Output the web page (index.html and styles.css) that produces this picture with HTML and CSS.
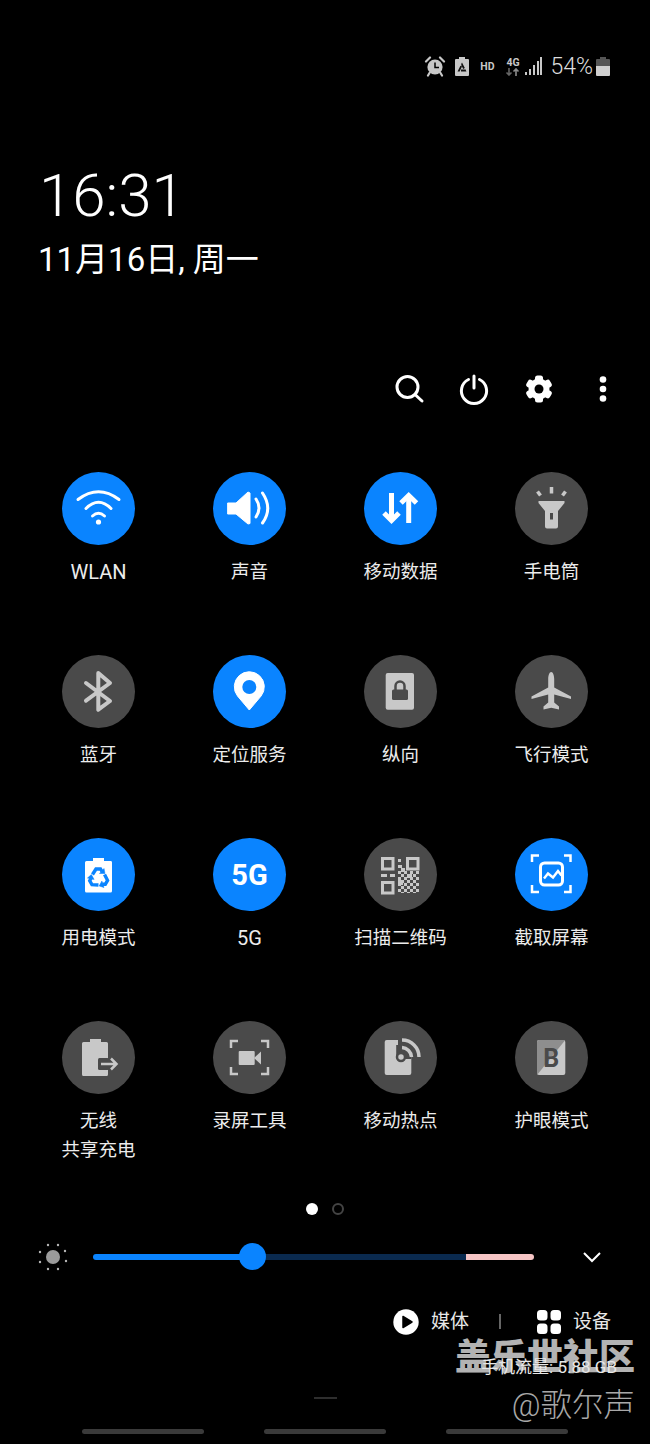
FILE: index.html
```html
<!DOCTYPE html>
<html lang="zh-CN">
<head>
    <meta charset="utf-8">
    <title>快捷面板</title>
    <link rel="stylesheet" href="styles.css">
</head>
<body>
<div class="page">
    <!-- status bar -->
    <div class="status">
        <svg class="st-alarm" width="22" height="22" viewBox="0 0 22 22">
            <circle cx="11" cy="12" r="7.6" fill="#c8c8c8"/>
            <path d="M11 7.5V12.5H15" fill="none" stroke="#000" stroke-width="1.5"/>
            <path d="M2 6.5 6 2.5M20 6.5 16 2.5M5.5 18 4 20.5M16.5 18 18 20.5" stroke="#c8c8c8" stroke-width="2.2" stroke-linecap="round"/>
        </svg>
        <svg class="st-batsave" width="14" height="19" viewBox="0 0 14 19">
            <path d="M4 0H10V2H13A1 1 0 0 1 14 3V18A1 1 0 0 1 13 19H1A1 1 0 0 1 0 18V3A1 1 0 0 1 1 2H4Z" fill="#c8c8c8"/>
            <path d="M4 13.500 7 7.500 10 13.500Z" fill="none" stroke="#111" stroke-width="1.800" stroke-dasharray="5 1.200"/>
        </svg>
        <span class="st-hd">HD</span>
        <span class="st-net">
            <span class="st-4g">4G</span>
            <svg width="15" height="8" viewBox="0 0 15 8">
                <path d="M4 0V7M1.5 4.5 4 7 6.5 4.5" fill="none" stroke="#666" stroke-width="1.6"/>
                <path d="M11 8V1M8.5 3.5 11 1 13.5 3.5" fill="none" stroke="#8c8c8c" stroke-width="1.6"/>
            </svg>
        </span>
        <svg class="st-signal" width="18" height="18" viewBox="0 0 18 18">
            <path d="M1 15H3V18H1ZM5 12H7V18H5ZM9 8H11V18H9ZM13 4H15V18H13ZM16 0H18V18H16Z" fill="#c8c8c8"/>
        </svg>
        <span class="st-pct">54%</span>
        <svg class="st-bat" width="14" height="19" viewBox="0 0 14 19">
            <path d="M4 0H10V2H13A1 1 0 0 1 14 3V9H0V3A1 1 0 0 1 1 2H4Z" fill="#555"/>
            <path d="M0 9H14V18A1 1 0 0 1 13 19H1A1 1 0 0 1 0 18Z" fill="#cfcfcf"/>
        </svg>
    </div>

    <div class="time">16:31</div>
    <div class="date">11月16日, 周一</div>

    <!-- search / power / settings / more -->
    <div class="actions">
        <svg width="32" height="32" viewBox="0 0 32 32" fill="none" stroke="#fff" stroke-width="3">
            <circle cx="13.500" cy="14" r="10.500"/>
            <path d="M21 21.500 28 28" stroke-linecap="round"/>
        </svg>
        <svg width="32" height="32" viewBox="0 0 32 32" fill="none" stroke="#fff" stroke-width="3" stroke-linecap="round">
            <path d="M16 3V15"/>
            <path d="M10.500 6.500A12.600 12.600 0 1 0 21.500 6.500"/>
        </svg>
        <svg width="32" height="32" viewBox="0 0 32 32" fill="#fff">
            <circle cx="16" cy="16" r="10.500"/>
            <rect x="12" y="2.500" width="8" height="27" rx="2.500"/>
            <rect x="12" y="2.500" width="8" height="27" rx="2.500" transform="rotate(60 16 16)"/>
            <rect x="12" y="2.500" width="8" height="27" rx="2.500" transform="rotate(120 16 16)"/>
            <circle cx="16" cy="16" r="4.500" fill="#000"/>
        </svg>
        <svg width="32" height="32" viewBox="0 0 32 32" fill="#fff">
            <circle cx="16" cy="6.500" r="3.300"/>
            <circle cx="16" cy="16" r="3.300"/>
            <circle cx="16" cy="25.500" r="3.300"/>
        </svg>
    </div>

    <!-- quick toggles -->
    <div class="tiles">
        <div class="tile">
            <div class="circle on">
                <svg viewBox="0 0 73 73" fill="none" stroke="#fff" stroke-width="3" stroke-linecap="round">
                    <path d="M16 27.500Q36.500 12 57 27.500"/>
                    <path d="M24 36.500Q36.500 24 49 36.500"/>
                    <path d="M30.500 44Q36.500 38.500 42.500 44"/>
                    <circle cx="36.500" cy="50" r="2.600" fill="#fff" stroke="none"/>
                </svg>
            </div>
            <div class="label latin">WLAN</div>
        </div>
        <div class="tile">
            <div class="circle on">
                <svg viewBox="0 0 73 73" fill="none" stroke="#fff" stroke-width="3" stroke-linecap="round">
                    <path d="M15 31H23L35 20 37 21V51.500L35 52 23 42H15Z" fill="#fff" stroke="#fff" stroke-width="1" stroke-linejoin="round"/>
                    <path d="M43 27Q49 36 43 45"/>
                    <path d="M49.500 21Q60 36.500 49.500 51"/>
                </svg>
            </div>
            <div class="label">声音</div>
        </div>
        <div class="tile">
            <div class="circle on">
                <svg viewBox="0 0 73 73" fill="none" stroke="#fff" stroke-width="5">
                    <path d="M27.500 21V48"/>
                    <path d="M20 41 27.500 48.500 35 41"/>
                    <path d="M44.700 51V24"/>
                    <path d="M37 31 44.700 23.500 52.500 31"/>
                </svg>
            </div>
            <div class="label">移动数据</div>
        </div>
        <div class="tile">
            <div class="circle off">
                <svg viewBox="0 0 73 73" fill="#c8c8c8">
                    <path d="M23.500 29H49.500V31L43 39V54.500A2 2 0 0 1 41 56.500H32A2 2 0 0 1 30 54.500V39L23.500 31Z"/>
                    <rect x="35" y="41" width="3" height="6.500" fill="#4a4a4a"/>
                    <path d="M36.500 15V21.500M22.500 19.500 25.500 23.500M50.500 19.500 47.500 23.500" stroke="#c8c8c8" stroke-width="3.500" fill="none"/>
                </svg>
            </div>
            <div class="label">手电筒</div>
        </div>

        <div class="tile">
            <div class="circle off">
                <svg viewBox="0 0 73 73" fill="none" stroke="#c8c8c8" stroke-width="4" stroke-linejoin="round" stroke-linecap="round">
                    <path d="M24 28 48 46 36.300 54.700V18L48 28 24 45.700"/>
                </svg>
            </div>
            <div class="label">蓝牙</div>
        </div>
        <div class="tile">
            <div class="circle on">
                <svg viewBox="0 0 73 73">
                    <path d="M36.300 55 24.500 41A15 15 0 1 1 48.100 41Z" fill="#fff" stroke="#fff" stroke-linejoin="round"/>
                    <circle cx="36.300" cy="32" r="7" fill="#0a84ff"/>
                </svg>
            </div>
            <div class="label">定位服务</div>
        </div>
        <div class="tile">
            <div class="circle off">
                <svg viewBox="0 0 73 73">
                    <rect x="21.700" y="18" width="28.300" height="36.700" rx="2" fill="#c8c8c8"/>
                    <rect x="28" y="34.500" width="16" height="10.500" rx="1.500" fill="#4a4a4a"/>
                    <path d="M31.500 35V31A4.500 4.500 0 0 1 40.500 31V35" fill="none" stroke="#4a4a4a" stroke-width="2.500"/>
                </svg>
            </div>
            <div class="label">纵向</div>
        </div>
        <div class="tile">
            <div class="circle off">
                <svg viewBox="0 0 73 73" fill="#c8c8c8">
                    <path d="M36.200 17C38 17 39.200 20.500 39.200 24V32.500L56 41.500V44L39.200 39.500V47.500L44 51.500V54.500L36.200 52.800 28.500 54.500V51.500L33.200 47.500V39.500L16.500 44V41.500L33.200 32.500V24C33.200 20.500 34.400 17 36.200 17Z"/>
                </svg>
            </div>
            <div class="label">飞行模式</div>
        </div>

        <div class="tile">
            <div class="circle on">
                <svg viewBox="0 0 73 73">
                    <path d="M31 20H42V23H49A1.500 1.500 0 0 1 50 24.500V53A1.500 1.500 0 0 1 48.500 54.500H24.500A1.500 1.500 0 0 1 23 53V24.500A1.500 1.500 0 0 1 24.500 23H31Z" fill="#fff"/>
                    <g fill="#0a84ff" stroke="#0a84ff">
                        <g>
                            <path d="M30.500 36.500 34 31H38.500L40 33.500" fill="none" stroke-width="3.400"/>
                            <path d="M37.500 35.500H43L42 30.500Z" stroke-width="0.500"/>
                        </g>
                        <g transform="rotate(120 36.500 40)">
                            <path d="M30.500 36.500 34 31H38.500L40 33.500" fill="none" stroke-width="3.400"/>
                            <path d="M37.500 35.500H43L42 30.500Z" stroke-width="0.500"/>
                        </g>
                        <g transform="rotate(240 36.500 40)">
                            <path d="M30.500 36.500 34 31H38.500L40 33.500" fill="none" stroke-width="3.400"/>
                            <path d="M37.500 35.500H43L42 30.500Z" stroke-width="0.500"/>
                        </g>
                    </g>
                </svg>
            </div>
            <div class="label">用电模式</div>
        </div>
        <div class="tile">
            <div class="circle on"><span class="badge-5g">5G</span></div>
            <div class="label latin">5G</div>
        </div>
        <div class="tile">
            <div class="circle off">
                <svg viewBox="0 0 73 73">
                    <defs>
                        <pattern id="qrdots" width="6" height="6" patternUnits="userSpaceOnUse" x="34" y="33">
                            <rect width="3" height="3" fill="#c8c8c8"/>
                            <rect x="3" y="3" width="3" height="3" fill="#c8c8c8"/>
                        </pattern>
                    </defs>
                    <g fill="none" stroke="#c8c8c8" stroke-width="3">
                        <rect x="18.500" y="20.500" width="10.500" height="10.500"/>
                        <rect x="43.500" y="20.500" width="10.500" height="10.500"/>
                        <rect x="18.500" y="44.500" width="10.500" height="10.500"/>
                    </g>
                    <g fill="#c8c8c8">
                        <rect x="34" y="21" width="3" height="3"/>
                        <rect x="34" y="27" width="4" height="3"/>
                        <rect x="17" y="36" width="6" height="3"/>
                        <rect x="26" y="36" width="5" height="3"/>
                        <rect x="37" y="30" width="4" height="4"/>
                        <rect x="43" y="36" width="5" height="4"/>
                        <rect x="34" y="42" width="5" height="5"/>
                    </g>
                    <rect x="34" y="33" width="21" height="22" fill="url(#qrdots)"/>
                </svg>
            </div>
            <div class="label">扫描二维码</div>
        </div>
        <div class="tile">
            <div class="circle on">
                <svg viewBox="0 0 73 73" fill="none" stroke="#fff" stroke-width="2.500">
                    <path d="M17 24V17.500H24M49 17.500H55.500V24M55.500 47V54H49M24 54H17V47"/>
                    <rect x="25.500" y="25" width="22" height="22" rx="4" stroke-width="3"/>
                    <path d="M29 40.500 33 35.500 38 39.500 43 33 46.500 37.500"/>
                </svg>
            </div>
            <div class="label">截取屏幕</div>
        </div>

        <div class="tile">
            <div class="circle off">
                <svg viewBox="0 0 73 73">
                    <path d="M28 18H39V21H44.500A1.500 1.500 0 0 1 46 22.500V53.500A1.500 1.500 0 0 1 44.500 55H21.500A1.500 1.500 0 0 1 20 53.500V22.500A1.500 1.500 0 0 1 21.500 21H28Z" fill="#c8c8c8"/>
                    <rect x="36" y="37" width="11" height="12" rx="1.500" fill="#4a4a4a"/>
                    <path d="M39 43H54M49 37.500 54.500 43 49 48.500" fill="none" stroke="#c8c8c8" stroke-width="2.500"/>
                </svg>
            </div>
            <div class="label">无线<br>共享充电</div>
        </div>
        <div class="tile">
            <div class="circle off">
                <svg viewBox="0 0 73 73">
                    <path d="M25 20H18V27M48 20H55V27M55 46V53H48M25 53H18V46" fill="none" stroke="#c8c8c8" stroke-width="2.500"/>
                    <rect x="25.700" y="30" width="16" height="14" rx="1" fill="#c8c8c8"/>
                    <path d="M41 37 48 30.500V43.500Z" fill="#c8c8c8"/>
                </svg>
            </div>
            <div class="label">录屏工具</div>
        </div>
        <div class="tile">
            <div class="circle off">
                <svg viewBox="0 0 73 73">
                    <rect x="20.700" y="19" width="26.600" height="35" rx="2" fill="#c8c8c8"/>
                    <path d="M34 34V14H59V36H47.300V38H34Z" fill="#4a4a4a"/>
                    <path d="M33.700 24V36" stroke="#4a4a4a" stroke-width="3"/>
                    <circle cx="37" cy="36" r="4" fill="#c8c8c8" stroke="#4a4a4a" stroke-width="2.500"/>
                    <path d="M38 19A17 17 0 0 1 55 36M38 26.500A10 10 0 0 1 47.500 36" fill="none" stroke="#c8c8c8" stroke-width="3.500"/>
                </svg>
            </div>
            <div class="label">移动热点</div>
        </div>
        <div class="tile">
            <div class="circle off">
                <svg viewBox="0 0 73 73">
                    <rect x="22" y="19" width="28.300" height="35" rx="2" fill="#c8c8c8"/>
                    <path d="M24 19H50.300L22 54V21A2 2 0 0 1 24 19Z" fill="#8e8e8e"/>
                    <text class="eye-b" x="36.300" y="45.500">B</text>
                </svg>
            </div>
            <div class="label">护眼模式</div>
        </div>
    </div>

    <div class="pager">
        <span class="dot-now"></span>
        <span class="dot-next"></span>
    </div>

    <!-- brightness -->
    <div class="brightness">
        <svg class="sun" width="30" height="30" viewBox="0 0 30 30">
            <circle cx="15" cy="15" r="7" fill="#9b9b9b"/>
            <g fill="#b5b5b5">
                <circle cx="10" cy="3" r="1.200"/>
                <circle cx="20" cy="3" r="1.200"/>
                <circle cx="27" cy="9" r="1.200"/>
                <circle cx="28" cy="19" r="1.200"/>
                <circle cx="20" cy="27" r="1.200"/>
                <circle cx="10" cy="27" r="1.200"/>
                <circle cx="2" cy="20" r="1.200"/>
                <circle cx="2" cy="10" r="1.200"/>
            </g>
        </svg>
        <div class="slider">
            <div class="seg-on"></div>
            <div class="seg-mid"></div>
            <div class="seg-high"></div>
            <div class="thumb"></div>
        </div>
        <svg class="chevron" width="24" height="14" viewBox="0 0 24 14">
            <path d="M4 3 12 11 20 3" fill="none" stroke="#fff" stroke-width="2"/>
        </svg>
    </div>

    <!-- media / devices -->
    <div class="media">
        <svg width="26" height="26" viewBox="0 0 26 26">
            <circle cx="13" cy="13" r="12.700" fill="#fff"/>
            <path d="M10 7.500V18.500L19 13Z" fill="#000" stroke="#000" stroke-width="1.500" stroke-linejoin="round"/>
        </svg>
        <span class="media-text">媒体</span>
        <span class="media-line"></span>
        <svg class="devices-icon" width="24" height="24" viewBox="0 0 24 24" fill="#fff">
            <rect width="10.500" height="10.500" rx="3.500"/>
            <rect x="13.500" width="10.500" height="10.500" rx="3.500"/>
            <rect y="13.500" width="10.500" height="10.500" rx="3.500"/>
            <rect x="13.500" y="13.500" width="10.500" height="10.500" rx="3.500"/>
        </svg>
        <span class="media-text">设备</span>
    </div>

    <div class="usage">手机流量: 5.88 GB</div>
    <div class="handle"></div>

    <div class="nav">
        <span></span>
        <span></span>
        <span></span>
    </div>

    <div class="mark-big">盖乐世社区</div>
    <div class="mark-small">@歌尔声</div>
</div>
</body>
</html>
```

FILE: styles.css
```css
body {
    margin: 0;
    background-color: #000;
}
.page {
    position: relative;
    width: 650px;
    height: 1444px;
    overflow: hidden;
    color: #fff;
    font-family: Roboto, "Noto Sans CJK SC", sans-serif;
}

/* status bar */
.status {
    display: flex;
    align-items: center;
    justify-content: flex-end;
    height: 28px;
    padding-top: 52px;
    padding-right: 40px;
    color: #c8c8c8;
}
.st-batsave {
    margin-left: 9px;
}
.st-hd {
    margin-left: 11px;
    font-size: 10.5px;
    font-weight: 700;
}
.st-net {
    display: flex;
    flex-direction: column;
    align-items: center;
    margin-left: 11px;
}
.st-4g {
    font-size: 10.5px;
    font-weight: 700;
    line-height: 11px;
}
.st-signal {
    margin-left: 4px;
}
.st-pct {
    margin-left: 8px;
    color: #dcdcdc;
    font-size: 23px;
    font-weight: 300;
}
.st-bat {
    margin-left: 3px;
}

.time {
    margin-top: 85px;
    padding-left: 39px;
    font-size: 60px;
    font-weight: 300;
    line-height: 62px;
}
.date {
    margin-top: 13px;
    padding-left: 38px;
    font-size: 33px;
    font-weight: 400;
    line-height: 40px;
}

.actions {
    display: flex;
    justify-content: flex-end;
    gap: 32.5px;
    height: 32px;
    margin-top: 93px;
    padding-right: 31px;
}

/* toggles */
.tiles {
    display: grid;
    grid-template-columns: repeat(4, 151px);
    grid-template-rows: repeat(3, 183px) 178px;
    margin-top: 67px;
    padding-left: 23px;
}
.tile {
    display: flex;
    flex-direction: column;
    align-items: center;
}
.circle {
    display: flex;
    align-items: center;
    justify-content: center;
    width: 73px;
    height: 73px;
    border-radius: 50%;
}
.circle svg {
    display: block;
    width: 73px;
    height: 73px;
}
.on {
    background-color: #0a84ff;
}
.off {
    background-color: #4a4a4a;
}
.label {
    margin-top: 13px;
    color: #ececec;
    font-size: 18.5px;
    line-height: 29px;
    text-align: center;
}
.latin {
    font-size: 20px;
}
.badge-5g {
    font-size: 29px;
    font-weight: 700;
}
.eye-b {
    fill: #4a4a4a;
    font-family: Roboto, sans-serif;
    font-size: 25px;
    font-weight: 700;
    text-anchor: middle;
}

.pager {
    display: flex;
    justify-content: center;
    align-items: center;
    gap: 14px;
    height: 12px;
    margin-top: 4px;
}
.dot-now {
    width: 12.5px;
    height: 12.5px;
    border-radius: 50%;
    background-color: #fff;
}
.dot-next {
    width: 8px;
    height: 8px;
    border: 2px solid #444;
    border-radius: 50%;
}

/* brightness */
.brightness {
    display: flex;
    align-items: center;
    height: 30px;
    margin-top: 26.5px;
    padding-left: 38px;
}
.slider {
    position: relative;
    display: flex;
    width: 441px;
    height: 6px;
    margin-left: 25px;
}
.seg-on {
    width: 159px;
    background-color: #0a84ff;
    border-radius: 3px 0 0 3px;
}
.seg-mid {
    width: 214px;
    background-color: #0a2a4f;
}
.seg-high {
    width: 68px;
    background-color: #f6c5c5;
    border-radius: 0 3px 3px 0;
}
.thumb {
    position: absolute;
    left: 146px;
    top: -10.5px;
    width: 27px;
    height: 27px;
    border-radius: 50%;
    background-color: #0a84ff;
}
.chevron {
    margin-left: 45.5px;
}

/* media row */
.media {
    display: flex;
    align-items: center;
    height: 28px;
    margin-top: 36px;
    padding-left: 393px;
}
.media-text {
    margin-left: 12px;
    color: #e8e8e8;
    font-size: 19px;
    line-height: 26px;
}
.media-line {
    width: 1.5px;
    height: 15px;
    margin-left: 30px;
    margin-right: 36.5px;
    background-color: #666;
}

.usage {
    height: 22px;
    margin-top: 20px;
    padding-right: 33px;
    color: #e8e8e8;
    font-size: 17px;
    line-height: 22px;
    text-align: right;
}
.handle {
    width: 23px;
    height: 2px;
    margin: 19px auto 0;
    background-color: #2e2e2e;
}
.nav {
    display: flex;
    justify-content: center;
    gap: 60px;
    margin-top: 30.5px;
}
.nav span {
    width: 122px;
    height: 5px;
    border-radius: 3px;
    background-color: #3a3a3a;
}

/* watermarks over the panel */
.mark-big {
    position: absolute;
    top: 1332px;
    right: 15px;
    color: rgba(230, 230, 230, 0.8);
    font-size: 36px;
    font-weight: 900;
    line-height: 52px;
}
.mark-small {
    position: absolute;
    top: 1384px;
    right: 15px;
    color: #a8a8a8;
    font-size: 31.5px;
    font-weight: 300;
    line-height: 44px;
}
```
